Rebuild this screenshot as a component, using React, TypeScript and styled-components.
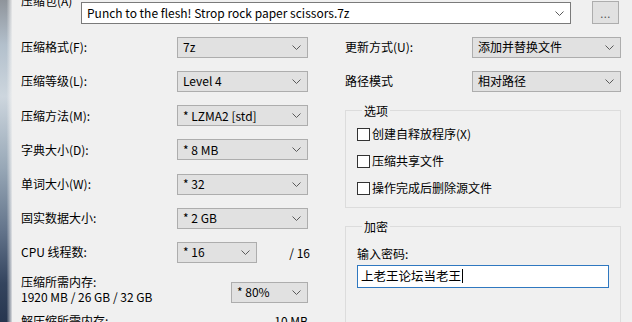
import React from "react";
import styled, { createGlobalStyle } from "styled-components";

const GlobalStyle = createGlobalStyle`
  html, body {
    margin: 0;
    padding: 0;
  }
  body {
    background: #f0f0f0;
    font-family: "Noto Sans CJK SC", "Noto Sans", sans-serif;
    font-size: 12px;
    color: #000;
  }
`;

const Chevron: React.FC = () => (
  <svg width="9" height="5" viewBox="0 0 9 5">
    <path d="M0.5 0.5 L4.5 4.5 L8.5 0.5" fill="none" stroke="#5a5a5a" strokeWidth="1" />
  </svg>
);

const Combo: React.FC<{ value?: string; white?: boolean; width?: number }> = ({ value, white, width }) => (
  <ComboBox $white={white} $width={width}>
    <span>{value}</span>
    <Chevron />
  </ComboBox>
);

const leftRows: [string, string][] = [
  ["压缩格式(F):", "7z"],
  ["压缩等级(L):", "Level 4"],
  ["压缩方法(M):", "* LZMA2 [std]"],
  ["字典大小(D):", "* 8 MB"],
  ["单词大小(W):", "* 32"],
  ["固实数据大小:", "* 2 GB"],
];

const options = ["创建自释放程序(X)", "压缩共享文件", "操作完成后删除源文件"];

const App: React.FC = () => {
  return (
    <>
      <GlobalStyle />
      <Screen>
        <DesktopEdge />
        <Dialog>
          <ArchiveRow>
            <ArchiveLabel>压缩包(A)</ArchiveLabel>
            <Combo value="Punch to the flesh! Strop rock paper scissors.7z" white width={490} />
            <BrowseButton>...</BrowseButton>
          </ArchiveRow>

          <Columns>
            <LeftCol>
              <SettingsGrid $labelWidth={156}>
                {leftRows.map(([label, value]) => (
                  <React.Fragment key={label}>
                    <FieldLabel>{label}</FieldLabel>
                    <Combo value={value} />
                  </React.Fragment>
                ))}
                <FieldLabel>CPU 线程数:</FieldLabel>
                <ThreadCell>
                  <Combo value="* 16" width={80} />
                  <span>/ 16</span>
                </ThreadCell>
              </SettingsGrid>

              <MemoryRow>
                <MemoryText>
                  <div>压缩所需内存:</div>
                  <div>1920 MB / 26 GB / 32 GB</div>
                </MemoryText>
                <MemoryCombo>
                  <Combo value="* 80%" width={77} />
                </MemoryCombo>
              </MemoryRow>
              <DecompressRow>
                <span>解压缩所需内存:</span>
                <span>10 MB</span>
              </DecompressRow>
            </LeftCol>

            <RightCol>
              <SettingsGrid $labelWidth={127}>
                <FieldLabel>更新方式(U):</FieldLabel>
                <Combo value="添加并替换文件" />
                <FieldLabel>路径模式</FieldLabel>
                <Combo value="相对路径" />
              </SettingsGrid>

              <GroupBox>
                <Legend>选项</Legend>
                {options.map((o) => (
                  <CheckRow key={o}>
                    <CheckBox />
                    <span>{o}</span>
                  </CheckRow>
                ))}
              </GroupBox>

              <GroupBox $tall>
                <Legend>加密</Legend>
                <PasswordLabel>输入密码:</PasswordLabel>
                <PasswordInput>
                  上老王论坛当老王
                  <Caret />
                </PasswordInput>
              </GroupBox>
            </RightCol>
          </Columns>
        </Dialog>
      </Screen>
    </>
  );
};

export default App;

const Screen = styled.div`
  display: flex;
  width: 632px;
  height: 322px;
  overflow: hidden;
`;

const DesktopEdge = styled.div`
  width: 12px;
  flex-shrink: 0;
  background:
    linear-gradient(to right, rgba(240, 240, 240, 0) 55%, rgba(240, 240, 240, 0.9) 100%),
    linear-gradient(
      to bottom,
      #8f949b 0%,
      #b3c0cc 14%,
      #cdd6de 30%,
      #98a8b7 52%,
      #62738a 72%,
      #34445e 88%,
      #27364f 100%
    );
`;

const Dialog = styled.div`
  flex: 1;
  display: flex;
  flex-direction: column;
  padding-left: 9px;
  background: #f0f0f0;
`;

const ArchiveRow = styled.div`
  display: flex;
  align-items: flex-start;
  height: 24px;
  margin-bottom: 13px;
`;

const ArchiveLabel = styled.div`
  width: 60px;
  margin-top: -7px;
  line-height: 16px;
`;

const ComboBox = styled.div<{ $white?: boolean; $width?: number }>`
  box-sizing: border-box;
  display: flex;
  align-items: center;
  justify-content: space-between;
  height: ${(p) => (p.$white ? 22 : 21)}px;
  width: ${(p) => (p.$width ? `${p.$width}px` : "auto")};
  margin-top: ${(p) => (p.$white ? 2 : 0)}px;
  padding: 0 6px 0 5px;
  background: ${(p) => (p.$white ? "#ffffff" : "#e1e1e1")};
  border: 1px solid ${(p) => (p.$white ? "#7a7a7a" : "#adadad")};
  line-height: 16px;
  white-space: nowrap;
  svg {
    flex-shrink: 0;
  }
`;

const BrowseButton = styled.div`
  box-sizing: border-box;
  width: 27px;
  height: 23px;
  margin-left: 21px;
  margin-top: 1px;
  display: flex;
  align-items: center;
  justify-content: center;
  background: #e1e1e1;
  border: 1px solid #adadad;
  color: #555;
  font-size: 11px;
  letter-spacing: 0.5px;
`;

const Columns = styled.div`
  display: flex;
  gap: 37px;
`;

const LeftCol = styled.div`
  width: 287px;
  display: flex;
  flex-direction: column;
`;

const RightCol = styled.div`
  width: 276px;
  display: flex;
  flex-direction: column;
`;

const SettingsGrid = styled.div<{ $labelWidth: number }>`
  display: grid;
  grid-template-columns: ${(p) => p.$labelWidth}px 1fr;
  grid-auto-rows: 20.5px;
  row-gap: 13.7px;
  align-items: center;
`;

const FieldLabel = styled.div`
  line-height: 16px;
  white-space: nowrap;
`;

const ThreadCell = styled.div`
  display: flex;
  align-items: center;
  justify-content: space-between;
  margin-right: -2px;
`;

const MemoryRow = styled.div`
  display: flex;
  justify-content: space-between;
  align-items: flex-start;
  margin-top: 11px;
`;

const MemoryText = styled.div`
  line-height: 15.5px;
`;

const MemoryCombo = styled.div`
  margin-top: 8px;
`;

const DecompressRow = styled.div`
  display: flex;
  justify-content: space-between;
  line-height: 15px;
  margin-top: 8px;
`;

const GroupBox = styled.fieldset<{ $tall?: boolean }>`
  margin: 11px 0 0 0;
  padding: 2px 10px ${(p) => (p.$tall ? "60px" : "5px")} 11px;
  border: 1px solid #dcdcdc;
  min-width: 0;
`;

const Legend = styled.legend`
  padding: 0 2px;
  margin-left: 5px;
  line-height: 16px;
`;

const CheckRow = styled.div`
  display: flex;
  align-items: center;
  height: 27px;
  gap: 2px;
  line-height: 16px;
`;

const CheckBox = styled.span`
  box-sizing: border-box;
  width: 13px;
  height: 13px;
  background: #fff;
  border: 1px solid #333;
`;

const PasswordLabel = styled.div`
  line-height: 16px;
  margin-top: 9px;
`;

const PasswordInput = styled.div`
  box-sizing: border-box;
  display: flex;
  align-items: center;
  width: 252px;
  height: 23px;
  margin-top: 3px;
  padding-left: 3px;
  background: #fff;
  border: 1px solid #2f78c0;
  font-size: 12.5px;
  line-height: 16px;
`;

const Caret = styled.span`
  width: 1px;
  height: 14px;
  margin-left: 1px;
  background: #000;
`;
